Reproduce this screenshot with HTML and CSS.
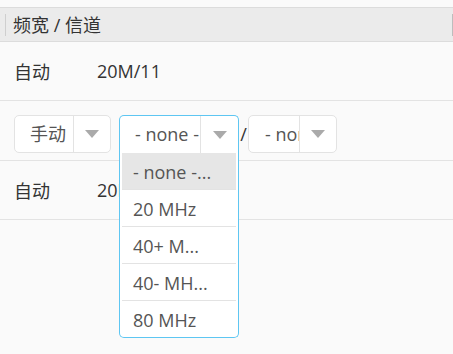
FILE: index.html
```html
<!DOCTYPE HTML>
<html>
    <head>
        <meta charset="utf-8">
        <title>频宽 / 信道</title>
        <link rel="stylesheet" href="styles.css">
    </head>
    <body>
        <div class="kop">
            <div class="kop-cel">频宽 / 信道</div>
            <div class="kop-rand"></div>
        </div>
        <div class="rij">
            <span class="modus">自动</span>
            <span class="waarde">20M/11</span>
        </div>
        <div class="rij rij-keuze">
            <div class="keuze keuze-modus">
                <div class="keuze-tekst">手动</div>
                <div class="keuze-knop"><span class="pijl"></span></div>
            </div>
            <div class="keuze-wrap">
                <div class="keuze keuze-open">
                    <div class="keuze-tekst">- none -</div>
                    <div class="keuze-knop"><span class="pijl"></span></div>
                </div>
                <!-- open lijst -->
                <ul class="lijst">
                    <li class="actief">- none -...</li>
                    <li>20 MHz</li>
                    <li>40+ M...</li>
                    <li>40- MH...</li>
                    <li>80 MHz</li>
                </ul>
            </div>
            <span class="streep">/</span>
            <div class="keuze keuze-kanaal">
                <div class="keuze-tekst">- none -</div>
                <div class="keuze-knop"><span class="pijl"></span></div>
            </div>
        </div>
        <div class="rij">
            <span class="modus">自动</span>
            <span class="waarde">20M/11</span>
        </div>
    </body>
</html>
```

FILE: styles.css
```css
html, body {
    min-height: 100vh;
}
body {
    margin: 0;
    background-color: #fafafa;
    font-family: "Open Sans", "Noto Sans CJK SC", sans-serif;
    font-size: 18px;
    color: #333;
}
.kop {
    margin-top: 7px;
    height: 33px;
    border-top: 1px solid #dcdcdc;
    border-bottom: 1px solid #dcdcdc;
    background-color: #ebebeb;
    display: flex;
    align-items: center;
    padding-left: 5px;
}
.kop-cel {
    flex: 1;
    border-left: 1px solid #cfcfcf;
    padding-left: 7px;
    line-height: 22px;
}
.kop-rand {
    width: 0;
    height: 22px;
    border-left: 1px solid #bdbdbd;
}
.rij {
    height: 58px;
    border-bottom: 1px solid #e3e3e3;
    display: flex;
    align-items: center;
    padding-left: 14px;
}
.modus {
    width: 83px;
}
.rij-keuze {
    height: 60px;
    align-items: flex-start;
    box-sizing: border-box;
    padding-top: 14px;
}
.keuze {
    display: flex;
    box-sizing: border-box;
    height: 38px;
    border: 1px solid #e3e3e3;
    border-radius: 5px;
    background-color: #fff;
    color: #555;
}
.keuze-tekst {
    padding-left: 15px;
    line-height: 36px;
    white-space: nowrap;
    overflow: hidden;
    box-sizing: border-box;
}
.keuze-knop {
    width: 36px;
    border-left: 1px solid #e3e3e3;
    display: flex;
    align-items: center;
    justify-content: center;
}
.pijl {
    width: 0;
    height: 0;
    border-left: 7px solid transparent;
    border-right: 7px solid transparent;
    border-top: 8px solid #aaa;
}
.keuze-modus .keuze-tekst { width: 58px; }
.keuze-wrap {
    position: relative;
    margin-left: 8px;
}
.keuze-open {
    width: 120px;
    border-color: #5ec6f2;
    border-bottom: none;
    border-radius: 5px 5px 0 0;
}
.keuze-open .keuze-tekst { width: 80px; }
.keuze-open .keuze-knop { width: 37px; }
.streep {
    width: 9px;
    text-align: center;
    line-height: 38px;
}
.keuze-kanaal { width: 89px; }
.keuze-kanaal .keuze-tekst { width: 50px; padding-left: 16px; }
.lijst {
    position: absolute;
    top: 38px;
    left: 0;
    width: 120px;
    box-sizing: border-box;
    margin: 0;
    padding: 0 2px;
    list-style: none;
    background-color: #fff;
    border: 1px solid #5ec6f2;
    border-top: none;
    border-radius: 0 0 5px 5px;
    color: #555;
    z-index: 2;
}
.lijst li {
    height: 37px;
    box-sizing: border-box;
    border-bottom: 1px solid #e3e3e3;
    padding-left: 11px;
    line-height: 38px;
    white-space: nowrap;
}
.lijst li:last-child { border-bottom: none; height: 36px; }
.lijst li.actief {
    background-color: #e6e6e6;
}
```
